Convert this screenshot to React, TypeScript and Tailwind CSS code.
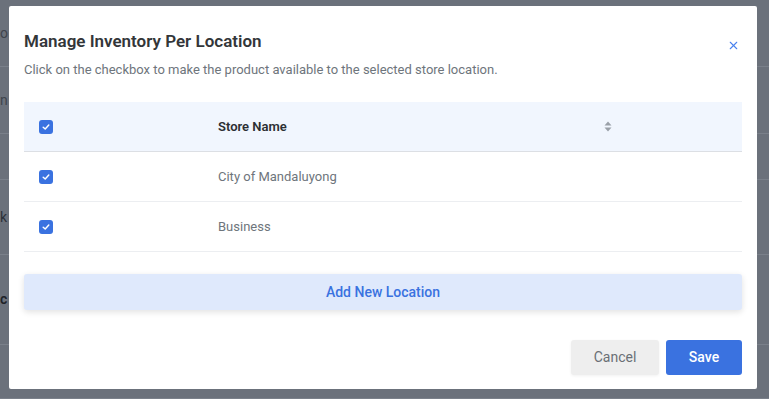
import { X } from 'lucide-react';

const rows = ['City of Mandaluyong', 'Business'];

// the page behind the overlay: only its left edge peeks out
const behind = [
  { h: 67, t: 'o', c: 'text-[#3f444c]' },
  { h: 67, t: 'n', c: 'text-[#3f444c]' },
  { h: 46, t: '', c: '' },
  { h: 75, t: 'k', c: 'text-[#2c3038]' },
  { h: 90, t: 'c', c: 'font-semibold text-[#1f2329]' },
  { h: 54, t: '', c: '' },
];

function Check() {
  return (
    <span className="flex h-[14px] w-[14px] items-center justify-center rounded-[3px] bg-[#3a72e0]">
      <svg width="8" height="8" viewBox="0 0 10 10" fill="none">
        <path d="M1.5 5.2 4 7.5 8.5 2.5" stroke="white" strokeWidth="1.8" strokeLinecap="round" strokeLinejoin="round" />
      </svg>
    </span>
  );
}

function SortIcon() {
  return (
    <svg width="8" height="11" viewBox="0 0 8 11" fill="#9aa0a8">
      <path d="M4 0.5 7.5 4.5H0.5Z" />
      <path d="M4 10.5 7.5 6.5H0.5Z" />
    </svg>
  );
}

export default function App() {
  return (
    <div className="relative h-[399px] w-full overflow-hidden bg-[#6b717b] font-['Roboto',sans-serif]">
      <div className="flex flex-col">
        {behind.map((b, i) => (
          <div key={i} style={{ height: b.h }} className="flex items-center border-b border-[#7a808a] text-[14px]">
            <span className={b.c}>{b.t}</span>
          </div>
        ))}
      </div>

      <div className="absolute left-[9px] top-[6px] flex h-[383px] w-[748px] flex-col rounded-[2px] bg-white px-[15px]">
        <div className="flex items-start justify-between pt-[23px]">
          <div>
            <h2 className="text-[17px] font-semibold leading-[24px] text-[#333639]">Manage Inventory Per Location</h2>
            <p className="mt-[8px] text-[13px] leading-[18px] text-[#6e757c]">
              Click on the checkbox to make the product available to the selected store location.
            </p>
          </div>
          <button className="mr-[2px] mt-[10px] text-[#4a82ee]">
            <X size={13} strokeWidth={2} />
          </button>
        </div>

        <div className="mt-[23px]">
          <div className="flex h-[50px] items-center border-b border-[#dcdfe4] bg-[#f1f6fe]">
            <div className="w-[194px] pl-[15px]">
              <Check />
            </div>
            <div className="flex-1 text-[13px] font-semibold text-[#2b2f33]">Store Name</div>
            <div className="w-[138px]">
              <SortIcon />
            </div>
          </div>
          {rows.map((r) => (
            <div key={r} className="flex h-[50px] items-center border-b border-[#eceef1]">
              <div className="w-[194px] pl-[15px]">
                <Check />
              </div>
              <div className="text-[13px] text-[#6e757c]">{r}</div>
            </div>
          ))}
        </div>

        <button className="mt-[22px] h-[36px] w-full rounded-[3px] bg-[#dfe9fc] text-[14px] font-medium text-[#3a72e0] shadow-[0_2px_6px_rgba(0,0,0,0.12)]">
          Add New Location
        </button>

        <div className="mt-auto mb-[14px] flex justify-end gap-[7px]">
          <button className="h-[35px] w-[88px] rounded-[3px] bg-[#eeeeee] text-[14px] text-[#6a6f75] shadow-[0_1px_3px_rgba(0,0,0,0.06)]">
            Cancel
          </button>
          <button className="h-[35px] w-[76px] rounded-[3px] bg-[#3a72e0] text-[14px] font-medium text-white">
            Save
          </button>
        </div>
      </div>
    </div>
  );
}
